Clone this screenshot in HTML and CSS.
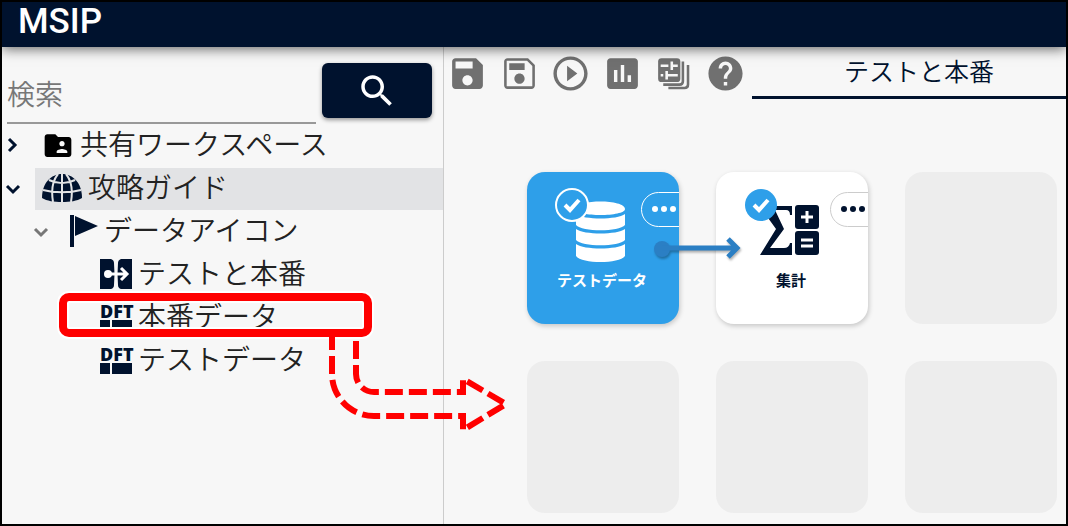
FILE: index.html
```
<!doctype html>
<html lang="ja">
    <head>
        <meta charset="utf-8">
        <meta name="viewport" content="width=device-width, initial-scale=1">
        <title>MSIP</title>
        <link rel="stylesheet" href="styles.css">
    </head>
    <body>
        <div class="app">
            <header class="header"><h1>MSIP</h1></header>

            <div class="content">
                <!-- Sidebar: search box and workspace tree -->
                <aside class="sidebar">
                    <form class="search">
                        <input type="text" placeholder="検索" aria-label="検索">
                        <button type="button" aria-label="検索する">
                            <svg viewBox="0 0 24 24"><path d="M15.5 14h-.79l-.28-.27C15.41 12.59 16 11.11 16 9.5 16 5.91 13.09 3 9.5 3S3 5.91 3 9.5 5.91 16 9.5 16c1.61 0 3.09-.59 4.23-1.57l.27.28v.79l5 4.99L20.49 19l-4.99-5zm-6 0C7.01 14 5 11.99 5 9.5S7.01 5 9.5 5 14 7.01 14 9.5 11.99 14 9.5 14z"/></svg>
                        </button>
                    </form>

                    <ul class="tree">
                        <li class="row">
                            <button class="toggle" type="button" aria-label="開く"><svg viewBox="0 0 22 22"><path d="M7 4l6 6-6 6"/></svg></button>
                            <a class="label" href="#">
                                <svg class="icon-folder" viewBox="0 0 24 24"><path d="M20 6h-8l-2-2H4c-1.1 0-2 .9-2 2v13c0 1.1.9 2 2 2h16c1.1 0 2-.9 2-2V8c0-1.1-.9-2-2-2zm-5 3c1.1 0 2 .9 2 2s-.9 2-2 2-2-.9-2-2 .9-2 2-2zm4 9h-8v-1c0-1.33 2.67-2 4-2s4 .67 4 2v1z"/></svg>
                                <span>共有ワークスペース</span>
                            </a>
                        </li>
                        <li class="row selected">
                            <button class="toggle" type="button" aria-label="閉じる"><svg viewBox="0 0 22 22"><path d="M5 8l6 6 6-6"/></svg></button>
                            <a class="label" href="#">
                                <svg class="icon-globe" viewBox="0 0 40 28">
                                    <path d="M0 24C0 9 9 0 20 0s20 9 20 24c-5 3-12 4-20 4S5 27 0 24z"/>
                                    <path class="lines" d="M20 0v28M16 0C11 6 9 16 11 28M24 0c5 6 7 16 5 28M7 6c8 4 18 4 26 0M1 16c11 3 27 3 38 0"/>
                                </svg>
                                <span>攻略ガイド</span>
                            </a>
                        </li>
                        <li class="row level2">
                            <button class="toggle" type="button" aria-label="閉じる"><svg viewBox="0 0 22 22"><path d="M5 8l6 6 6-6"/></svg></button>
                            <a class="label" href="#">
                                <svg class="icon-flag" viewBox="0 0 28 32"><path d="M0 0h4v32H0zM5 1l23 10L5 21z"/></svg>
                                <span>データアイコン</span>
                            </a>
                        </li>
                        <li class="row level3">
                            <a class="label" href="#">
                                <svg class="icon-item" viewBox="0 0 32 32">
                                    <path d="M0 1h11q3 1 3 4 1 11 0 22 0 3-3 4H0zM32 1H21q-3 1-3 4-1 11 0 22 0 3 3 4h11z"/>
                                    <circle class="white" cx="8" cy="16" r="4"/>
                                    <path class="white-line" d="M8 16h18M21 10l6 6-6 6"/>
                                </svg>
                                <span>テストと本番</span>
                            </a>
                        </li>
                        <li class="row level3">
                            <a class="label" href="#">
                                <span class="dft"><b>DFT</b><i></i><i></i></span>
                                <span>本番データ</span>
                            </a>
                        </li>
                        <li class="row level3">
                            <a class="label" href="#">
                                <span class="dft"><b>DFT</b><i></i><i></i></span>
                                <span>テストデータ</span>
                            </a>
                        </li>
                    </ul>
                </aside>

                <main class="main">
                    <div class="topbar">
                        <div class="tools">
                            <button type="button" aria-label="保存"><svg viewBox="0 0 24 24"><path d="M17 3H5c-1.11 0-2 .9-2 2v14c0 1.1.89 2 2 2h14c1.1 0 2-.9 2-2V7l-4-4zm-5 16c-1.66 0-3-1.34-3-3s1.34-3 3-3 3 1.34 3 3-1.34 3-3 3zm3-10H5V5h10v4z"/></svg></button>
                            <button type="button" aria-label="別名で保存"><svg viewBox="0 0 24 24"><path d="M17 3H5c-1.11 0-2 .9-2 2v14c0 1.1.89 2 2 2h14c1.1 0 2-.9 2-2V7l-4-4zm2.5 16.5h-15v-15h11.9l3.1 3.1v11.9zM12 12c-1.66 0-3 1.34-3 3s1.34 3 3 3 3-1.34 3-3-1.34-3-3-3zM6 6h9v4H6z"/></svg></button>
                            <button type="button" aria-label="実行"><svg viewBox="0 0 24 24"><path d="M10 16.5l6-4.5-6-4.5v9zM12 2C6.48 2 2 6.48 2 12s4.48 10 10 10 10-4.48 10-10S17.52 2 12 2zm0 18c-4.41 0-8-3.59-8-8s3.59-8 8-8 8 3.59 8 8-3.59 8-8 8z"/></svg></button>
                            <button type="button" aria-label="グラフ"><svg viewBox="0 0 24 24"><path d="M19 3H5c-1.1 0-2 .9-2 2v14c0 1.1.9 2 2 2h14c1.1 0 2-.9 2-2V5c0-1.1-.9-2-2-2zM9 17H7v-7h2v7zm4 0h-2V7h2v10zm4 0h-2v-4h2v4z"/></svg></button>
                            <button type="button" aria-label="設定"><svg viewBox="0 0 48 48">
                                <rect x="6" y="6" width="26" height="28" rx="4"/>
                                <path class="knobs" d="M9 15h9M22 15h7M22 10v10M9 26h3M16 26h13M16 21v10"/>
                                <path class="sheets" d="M35 10v23q0 4-4 4H12M41 14v23q0 4-4 4H18"/>
                            </svg></button>
                            <button type="button" aria-label="ヘルプ"><svg viewBox="0 0 24 24"><path d="M12 2C6.48 2 2 6.48 2 12s4.48 10 10 10 10-4.48 10-10S17.52 2 12 2zm1 17h-2v-2h2v2zm2.07-7.75l-.9.92C13.45 12.9 13 13.5 13 15h-2v-.5c0-1.1.45-2.1 1.17-2.83l1.24-1.26c.37-.36.59-.86.59-1.41 0-1.1-.9-2-2-2s-2 .9-2 2H8c0-2.21 1.79-4 4-4s4 1.79 4 4c0 .88-.36 1.68-.93 2.25z"/></svg></button>
                        </div>
                        <a class="tab" href="#">テストと本番</a>
                    </div>

                    <!-- Flow canvas -->
                    <div class="canvas">
                        <div class="cell node blue">
                            <svg class="node-icon" viewBox="0 0 60 60"><path d="M4 8c0-10 49-10 49 0 0 8-49 8-49 0zM4 13c8 6 41 6 49 0v11c-6 7-43 7-49 0zM4 28c8 6 41 6 49 0v11c-6 7-43 7-49 0zM4 43c8 6 41 6 49 0v12c-6 8-43 8-49 0z"/></svg>
                            <span>テストデータ</span>
                            <svg class="check" viewBox="0 0 34 34"><circle cx="17" cy="17" r="16"/><path d="M10 17l5 5 9-10"/></svg>
                            <button class="more" type="button" aria-label="メニュー"><i></i><i></i><i></i></button>
                        </div>
                        <div class="cell node">
                            <svg class="node-icon" viewBox="0 0 60 60">
                                <path d="M0 5h31v9h-2q0-5-4-5H14l9 19L9 47h14q5 0 6-5h2v12H-1l16-26L0 7z"/>
                                <rect x="34" y="4" width="24" height="24" rx="3"/><rect x="34" y="30" width="24" height="24" rx="3"/>
                                <path class="white-line" d="M40 16h12M46 10v12M40 39h12M40 45h12"/>
                            </svg>
                            <span>集計</span>
                            <svg class="check" viewBox="0 0 34 34"><circle cx="17" cy="17" r="16"/><path d="M10 17l5 5 9-10"/></svg>
                            <button class="more" type="button" aria-label="メニュー"><i></i><i></i><i></i></button>
                        </div>
                        <div class="cell"></div>
                        <div class="cell"></div>
                        <div class="cell"></div>
                        <div class="cell"></div>
                        <svg class="link" viewBox="0 0 90 24"><circle cx="10" cy="13" r="8"/><path d="M10 12h74M76 3l9 9-9 9"/></svg>
                    </div>
                </main>
            </div>

            <!-- Guide marks over the screen -->
            <div class="highlight"></div>
            <svg class="guide" viewBox="0 0 190 100"><path d="M7 3V40a42 42 0 0 0 42 42h89v14l43-26-43-25v13H49a18 18 0 0 1-18-18V3"/></svg>
        </div>
    </body>
</html>
```
FILE: styles.css
```
* { box-sizing: border-box; }

body {
    margin: 0;
    background: #f7f7f7;
    color: #222;
    font-family: "Noto Sans CJK JP", sans-serif;
}
button {
    padding: 0;
    border: 0;
    background: none;
}
svg { display: block; flex: none; }
a { color: inherit; text-decoration: none; }

.app {
    position: relative;
    display: flex;
    flex-direction: column;
    min-height: 100vh;
    border: 2px solid #000;
    overflow: hidden;
}
.header {
    z-index: 1;
    height: 45px;
    padding-left: 16px;
    background: #00122e;
    color: #fff;
    box-shadow: 0 2px 12px rgba(0, 0, 0, 0.6);
}
.header h1 {
    margin: 0;
    font: 500 35px/40px Roboto, sans-serif;
}
.content { display: flex; flex: 1; }

/* Sidebar */
.sidebar {
    flex: none;
    width: 442px;
    border-right: 1px solid #ccc;
}
.search {
    display: flex;
    gap: 6px;
    padding: 16px 11px 0 5px;
}
.search input {
    flex: 1;
    min-width: 0;
    height: 61px;
    padding: 0;
    border: 0;
    border-bottom: 2px solid #999;
    background: none;
    font: 350 28px "Noto Sans CJK JP", sans-serif;
}
.search input::placeholder { color: #777; opacity: 1; }
.search button {
    display: flex;
    align-items: center;
    justify-content: center;
    width: 110px;
    height: 55px;
    border-radius: 6px;
    background: #00122e;
    box-shadow: 0 2px 4px rgba(0, 0, 0, 0.4);
}
.search button svg { width: 42px; fill: #fff; }

.tree {
    display: flex;
    flex-direction: column;
    gap: 1px;
    margin: 0;
    padding: 1px 0 0;
    list-style: none;
}
.row { display: flex; gap: 11px; height: 42px; }
.level2 { padding-left: 28px; }
.level3 { padding-left: 91px; }
.toggle { width: 22px; }
.toggle path { fill: none; stroke: #00122e; stroke-width: 3; }
.level2 .toggle path { stroke: #777; }
.label {
    display: flex;
    flex: 1;
    align-items: center;
    gap: 6px;
    padding: 0 0 2px 7px;
    font-size: 28px;
    font-weight: 350;
    line-height: 36px;
    white-space: nowrap;
    fill: #00122e;
}
.label > span:last-child { padding-bottom: 4px; }
.selected .label { background: #e2e3e5; }
.icon-folder { width: 32px; fill: #000; }
.icon-globe { width: 40px; }
.icon-globe .lines { fill: none; stroke: #e2e3e5; stroke-width: 2; }
.icon-flag { width: 28px; }
.icon-item { width: 32px; }
.white { fill: #fff; }
.white-line { fill: none; stroke: #fff; stroke-width: 3; }
/* DFT mark: the letters over two blocks */
.dft {
    display: grid;
    grid-template-columns: 10px 20px;
    grid-template-rows: 14px 11px;
    gap: 2px;
    color: #00122e;
}
.dft b {
    grid-column: 1 / 3;
    font: 900 18px/14px "Noto Sans", sans-serif;
}
.dft i { background: #00122e; }

/* Toolbar and tab */
.main { flex: 1; min-width: 0; }
.topbar { display: flex; height: 52px; }
.tools {
    display: flex;
    flex: none;
    align-items: center;
    justify-content: space-between;
    width: 308px;
    padding: 0 6px 0 3px;
}
.tools svg { width: 41px; fill: #707070; }
.tools .knobs { fill: none; stroke: #f7f7f7; stroke-width: 3; }
.tools .sheets { fill: none; stroke: #707070; stroke-width: 3; }
.tab {
    flex: 1;
    padding-left: 20px;
    border-bottom: 3px solid #00122e;
    color: #00122e;
    font-size: 25px;
    font-weight: 350;
    line-height: 46px;
    text-align: center;
    white-space: nowrap;
}

/* Canvas */
.canvas {
    position: relative;
    display: grid;
    grid-template-columns: repeat(3, 152px);
    gap: 37px;
    padding: 73px 0 11px 83px;
}
.cell {
    height: 152px;
    border-radius: 18px;
    background: #ededed;
}
.node {
    position: relative;
    display: flex;
    flex-direction: column;
    align-items: center;
    padding: 29px 2px 0 0;
    overflow: hidden;
    background: #fff;
    box-shadow: 1px 2px 5px rgba(0, 0, 0, 0.2);
    color: #00122e;
    font-size: 15px;
    font-weight: 700;
    line-height: 20px;
}
.node-icon { width: 60px; margin-bottom: 9px; fill: #00122e; overflow: visible; }
.blue { background: #2e9fe9; color: #fff; }
.blue .node-icon { fill: #fff; }
.check {
    position: absolute;
    top: 16px;
    left: 28px;
    width: 34px;
}
.check circle { fill: #2e9fe9; }
.check path { fill: none; stroke: #fff; stroke-width: 4; }
.blue .check circle { stroke: #fff; stroke-width: 2; }
.more {
    position: absolute;
    top: 20px;
    right: -2px;
    display: flex;
    align-items: center;
    gap: 3px;
    width: 40px;
    height: 35px;
    padding: 0 0 2px 10px;
    border: 1px solid #ccc;
    border-radius: 18px 0 0 18px;
    background: #fff;
}
.more i {
    width: 6px;
    height: 6px;
    border-radius: 50%;
    background: #00122e;
}
.blue .more { border-color: #fff; background: #2e9fe9; }
.blue .more i { background: #fff; }
.link {
    position: absolute;
    top: 137px;
    left: 208px;
    width: 90px;
    filter: drop-shadow(1px 2px 1px rgba(0, 0, 0, 0.3));
}
.link circle { fill: #2b7fc4; }
.link path { fill: none; stroke: #2b7fc4; stroke-width: 5; }

/* Guide marks */
.highlight {
    position: absolute;
    top: 291px;
    left: 57px;
    width: 313px;
    height: 44px;
    border: 8px solid #f00;
    border-radius: 10px;
    box-shadow: 0 0 0 2px #fff, inset 0 0 0 2px #fff;
}
.guide {
    position: absolute;
    top: 332px;
    left: 323px;
    width: 190px;
}
.guide path {
    fill: none;
    stroke: #f00;
    stroke-width: 6;
    stroke-dasharray: 18 6;
    stroke-dashoffset: 5;
}
```
